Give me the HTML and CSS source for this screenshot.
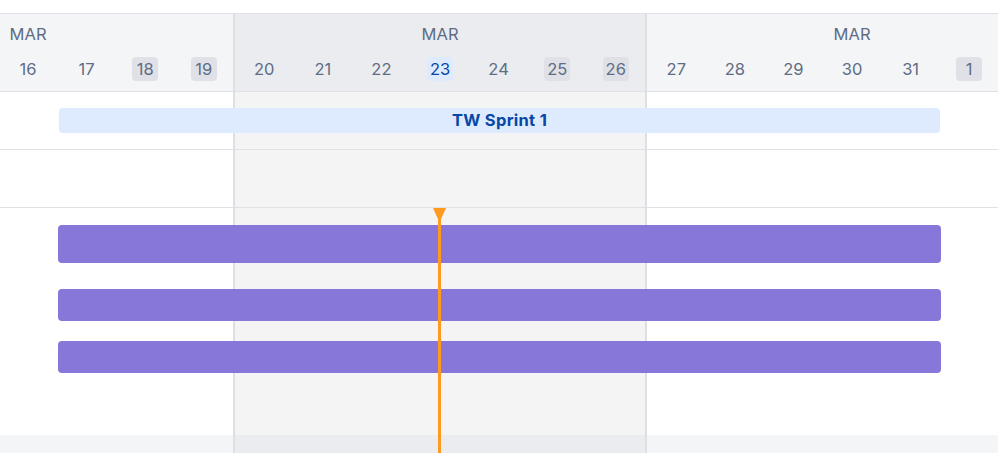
FILE: index.html
```html
<!DOCTYPE html>
<html lang="en">
<head>
<meta charset="utf-8">
<title>Timeline</title>
<link rel="stylesheet" href="styles.css">
</head>
<body>
<div class="chart">
  <div class="weeks">
    <div class="week">
      <div class="week-head">
        <div class="month">MAR</div>
        <div class="days">
          <div class="day"></div>
          <div class="day"></div>
          <div class="day"></div>
          <div class="day"><span class="num">16</span></div>
          <div class="day"><span class="num">17</span></div>
          <div class="day"><span class="num weekend">18</span></div>
          <div class="day"><span class="num weekend">19</span></div>
        </div>
      </div>
      <div class="week-body"></div>
      <div class="week-foot"></div>
    </div>
    <div class="week current">
      <div class="week-head">
        <div class="month">MAR</div>
        <div class="days">
          <div class="day"><span class="num">20</span></div>
          <div class="day"><span class="num">21</span></div>
          <div class="day"><span class="num">22</span></div>
          <div class="day"><span class="num today">23</span></div>
          <div class="day"><span class="num">24</span></div>
          <div class="day"><span class="num weekend">25</span></div>
          <div class="day"><span class="num weekend">26</span></div>
        </div>
      </div>
      <div class="week-body"></div>
      <div class="week-foot"></div>
    </div>
    <div class="week">
      <div class="week-head">
        <div class="month">MAR</div>
        <div class="days">
          <div class="day"><span class="num">27</span></div>
          <div class="day"><span class="num">28</span></div>
          <div class="day"><span class="num">29</span></div>
          <div class="day"><span class="num">30</span></div>
          <div class="day"><span class="num">31</span></div>
          <div class="day"><span class="num weekend">1</span></div>
          <div class="day"></div>
        </div>
      </div>
      <div class="week-body"></div>
      <div class="week-foot"></div>
    </div>
  </div>

  <div class="lanes">
    <div class="lane lane-sprint">
      <div class="sprint">TW Sprint 1</div>
    </div>
    <div class="lane"></div>
    <div class="lane lane-issues">
      <div class="bar bar-tall"></div>
      <div class="bar bar-second"></div>
      <div class="bar bar-third"></div>
    </div>
  </div>

  <div class="today-marker">
    <svg class="today-cap" width="13" height="12" viewBox="0 0 13 12"><path d="M0 0 H13 L7.6 12 H5.4 Z" fill="#ff991f"/></svg>
    <div class="today-line"></div>
  </div>
</div>
</body>
</html>
```

FILE: styles.css
```css
html, body {
  margin: 0;
  padding: 0;
  background: #ffffff;
  overflow: hidden;
}

body {
  font-family: "Inter", "Liberation Sans", sans-serif;
  width: 998px;
  height: 453px;
}

.chart {
  position: relative;
  margin-top: 13px;
  width: 998px;
  height: 440px;
  overflow: hidden;
}

.weeks {
  display: flex;
  margin-left: -177px;
  height: 100%;
}

.week {
  flex: none;
  width: 412px;
  box-sizing: border-box;
  border-right: 2px solid #dcdfe4;
  display: flex;
  flex-direction: column;
}

.week-head {
  box-sizing: border-box;
  height: 79px;
  border-top: 1px solid #dfe1e6;
  border-bottom: 1px solid #dfe1e6;
  background: #f4f5f7;
  padding-top: 10px;
  display: flex;
  flex-direction: column;
  gap: 13px;
}

.week-body {
  height: 343px;
  background: #ffffff;
}

.week-foot {
  flex: 1;
  background: #f4f5f7;
}

.week.current .week-head { background: #ebecf0; }
.week.current .week-body { background: #f4f4f5; }
.week.current .week-foot { background: #ebecf0; }

.month {
  height: 20px;
  line-height: 20px;
  text-align: center;
  font-size: 16.5px;
  color: #5e6c84;
  letter-spacing: 0.1px;
}

.days {
  display: flex;
  height: 24px;
}

.day {
  flex: 1;
  display: flex;
  justify-content: center;
}

.num {
  width: 26px;
  height: 24px;
  line-height: 24px;
  text-align: center;
  border-radius: 4px;
  font-size: 16.5px;
  color: #5e6c84;
}

.num.weekend { background: #dfe1e6; }
.num.today { background: #deebff; color: #0747a6; }

.lanes {
  position: absolute;
  top: 79px;
  left: 0;
  right: 0;
  display: flex;
  flex-direction: column;
}

.lane {
  box-sizing: border-box;
  height: 58px;
  border-bottom: 1px solid #dfe1e6;
}

.lane-sprint {
  padding-top: 16px;
}

.sprint {
  margin-left: 59px;
  width: 881px;
  height: 25px;
  line-height: 25px;
  border-radius: 4px;
  background: #deebff;
  color: #0747a6;
  font-weight: 700;
  font-size: 16.5px;
  letter-spacing: 0.3px;
  text-align: center;
}

.lane-issues {
  height: auto;
  border-bottom: none;
  padding-top: 17px;
  display: flex;
  flex-direction: column;
}

.bar {
  margin-left: 58px;
  width: 883px;
  height: 32px;
  border-radius: 4px;
  background: #8777d9;
}

.bar-tall { height: 38px; }
.bar-second { margin-top: 26px; }
.bar-third { margin-top: 20px; }

.today-marker {
  position: absolute;
  top: 195px;
  left: 433px;
  bottom: 0;
  width: 13px;
  display: flex;
  flex-direction: column;
  align-items: center;
}

.today-cap {
  display: block;
  flex: none;
}

.today-line {
  width: 3px;
  flex: 1;
  margin-top: -1px;
  background: #ff991f;
}
```
